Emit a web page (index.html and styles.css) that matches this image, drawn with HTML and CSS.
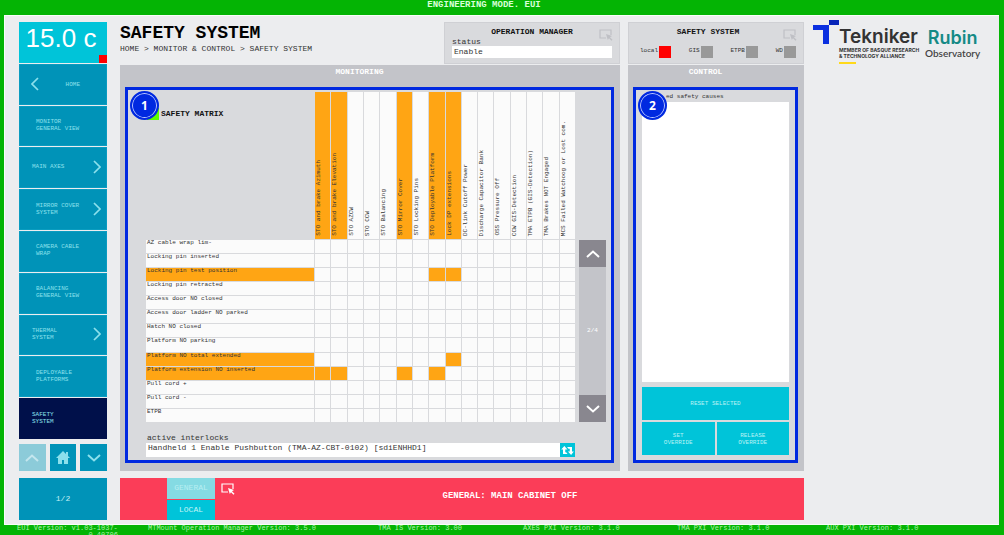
FILE: index.html
```html
<!DOCTYPE html>
<html lang="en">
<head>
<meta charset="utf-8">
<title>Safety System</title>
<link rel="stylesheet" href="styles.css">
</head>
<body>
<svg class="symbols" aria-hidden="true">
  <symbol id="pick" viewBox="0 0 14 12"><path d="M7 9H1V1h11v5" fill="none" stroke="currentColor" stroke-width="1.200"/><path d="M7 5l6 2-2 1.200 2.500 2.500-1 1-2.500-2.500L8.800 11z" fill="currentColor"/></symbol>
  <symbol id="right" viewBox="0 0 8 14"><path d="M1 1l6 6-6 6" fill="none" stroke="currentColor" stroke-width="1.700"/></symbol>
  <symbol id="left" viewBox="0 0 8 14"><path d="M7 1L1 7l6 6" fill="none" stroke="currentColor" stroke-width="1.700"/></symbol>
  <symbol id="up" viewBox="0 0 14 8"><path d="M1 7l6-5.500L13 7" fill="none" stroke="currentColor" stroke-width="2"/></symbol>
  <symbol id="down" viewBox="0 0 14 8"><path d="M1 1l6 5.500L13 1" fill="none" stroke="currentColor" stroke-width="2"/></symbol>
</svg>

<header class="mode-bar">ENGINEERING MODE. EUI</header>

<div class="screen">
  <nav class="menu" aria-label="Main menu">
    <div class="temperature">15.0 c<span class="led led-alarm"></span></div>
    <button class="item item-home"><svg class="chev"><use href="#left"/></svg><span>HOME</span></button>
    <button class="item"><span>MONITOR<br>GENERAL VIEW</span></button>
    <button class="item item-wide"><span>MAIN AXES</span><svg class="chev"><use href="#right"/></svg></button>
    <button class="item"><span>MIRROR COVER<br>SYSTEM</span><svg class="chev"><use href="#right"/></svg></button>
    <button class="item"><span>CAMERA CABLE<br>WRAP</span></button>
    <button class="item"><span>BALANCING<br>GENERAL VIEW</span></button>
    <button class="item item-wide"><span>THERMAL<br>SYSTEM</span><svg class="chev"><use href="#right"/></svg></button>
    <button class="item"><span>DEPLOYABLE<br>PLATFORMS</span></button>
    <button class="item item-wide item-current" aria-current="page"><span>SAFETY<br>SYSTEM</span></button>
  </nav>

  <div class="menu-tools">
    <button class="tool" disabled aria-label="Up"><svg class="arrow"><use href="#up"/></svg></button>
    <button class="tool" aria-label="Home"><svg class="house" viewBox="0 0 14 13"><path d="M7 0L0 7h2v6h4V9h2v4h4V7h2l-2-2V1h-2v2z" fill="currentColor"/></svg></button>
    <button class="tool" aria-label="Down"><svg class="arrow"><use href="#down"/></svg></button>
  </div>

  <main class="main">
    <div class="heading">
      <div class="titles">
        <h1>SAFETY SYSTEM</h1>
        <p class="crumbs">HOME &gt; MONITOR &amp; CONTROL &gt; SAFETY SYSTEM</p>
      </div>
      <section class="card manager">
        <h2>OPERATION MANAGER</h2>
        <svg class="pick"><use href="#pick"/></svg>
        <label for="status">status</label>
        <input id="status" class="field" value="Enable" readonly>
      </section>
    </div>

    <section class="card safety">
      <h2>SAFETY SYSTEM</h2>
      <svg class="pick"><use href="#pick"/></svg>
      <div class="leds">
        <span class="lamp">local<i class="led led-red"></i></span>
        <span class="lamp">GIS<i class="led"></i></span>
        <span class="lamp">ETPB<i class="led"></i></span>
        <span class="lamp">WD<i class="led"></i></span>
      </div>
    </section>

    <section class="panel">
      <h2>MONITORING</h2>
      <div class="frame">
        <span class="badge">1</span>
        <div class="matrix-row">
          <table class="matrix">
            <colgroup><col class="col-cause"><col span="16"></colgroup>
            <thead id="effects"></thead>
            <tbody id="causes"></tbody>
          </table>
          <div class="scroller">
            <button aria-label="Previous page"><svg class="arrow"><use href="#up"/></svg></button>
            <span>2/4</span>
            <button aria-label="Next page"><svg class="arrow"><use href="#down"/></svg></button>
          </div>
        </div>
        <div class="interlocks">
          <label for="interlocks">active interlocks</label>
          <div class="interlock-line">
            <input id="interlocks" class="field" value="Handheld 1 Enable Pushbutton (TMA-AZ-CBT-0102) [sdiENHHD1]" readonly>
            <button class="refresh" aria-label="Refresh"><svg viewBox="0 0 14 10"><path d="M3.500 0L0 4h2v5h5L5.500 7H4.500V4H7zM6.500 1L8 3h1.500v3H7.500L11 10l3-4h-2V1z" fill="currentColor"/></svg></button>
          </div>
        </div>
      </div>
    </section>

    <section class="panel">
      <h2>CONTROL</h2>
      <div class="frame control">
        <span class="badge">2</span>
        <label for="safety-causes">ed safety causes</label>
        <select id="safety-causes" multiple></select>
        <div class="actions">
          <button class="reset">RESET SELECTED</button>
          <button>SET<br>OVERRIDE</button>
          <button>RELEASE<br>OVERRIDE</button>
        </div>
      </div>
    </section>
  </main>

  <aside class="logos">
    <div class="tekniker">
      <svg class="mark" viewBox="0 0 26 24"><path d="M0 5h16v19h-6V10H0z" fill="#0a2fe0"/><path d="M16 0h10v5H16z" fill="#0724b8"/></svg>
      <div class="tekniker-text">
        <strong>Tekniker</strong>
        <small>MEMBER OF BASQUE RESEARCH<br>&amp; TECHNOLOGY ALLIANCE</small>
        <span class="underline"></span>
      </div>
    </div>
    <div class="rubin"><strong>Rubin</strong><span>Observatory</span></div>
  </aside>

  <div class="page-count">1/2</div>

  <div class="alarm">
    <div class="switch"><button disabled>GENERAL</button><button>LOCAL</button></div>
    <svg class="pick"><use href="#pick"/></svg>
    <strong>GENERAL: MAIN CABINET OFF</strong>
  </div>
</div>

<footer class="versions">
  <span class="eui">EUI Version: v1.03-1037-<br>0.40706</span>
  <span>MTMount Operation Manager Version: 3.5.0</span>
  <span>TMA IS Version: 3.00</span>
  <span>AXES PXI Version: 3.1.0</span>
  <span>TMA PXI Version: 3.1.0</span>
  <span>AUX PXI Version: 3.1.0</span>
</footer>
<script src="matrix.js"></script>
</body>
</html>
```

FILE: styles.css
```css
:root {
  --green: #04b404;
  --page: #ecedef;
  --card: #d9dadd;
  --panel: #c3c4c9;
  --teal: #0093b8;
  --cyan: #00c4d9;
  --ice: #8be0ec;
  --blue: #0029e0;
  --orange: #ffa514;
}
* { box-sizing: border-box; }
body {
  display: flex;
  flex-direction: column;
  height: 100vh;
  margin: 0;
  overflow: hidden;
  background: var(--green);
  color: #333;
  font: 8px/10px "Liberation Mono", monospace;
}
h1, h2, p { margin: 0; }
h2 { color: #111; font-size: 8px; line-height: 10px; text-align: center; }
button { padding: 0; border: 0; font: inherit; color: inherit; }
svg { display: block; }
.symbols { position: absolute; width: 0; height: 0; }

.mode-bar {
  height: 15px;
  padding-right: 36px;
  color: #d8ffd8;
  font-size: 9px;
  font-weight: bold;
  text-align: center;
}
.screen {
  flex: 1;
  min-height: 0;
  display: grid;
  grid-template-columns: 88px minmax(0, 1fr) 182px;
  grid-template-rows: minmax(0, 1fr) 27px 7px 42px;
  column-gap: 13px;
  margin: 0 5px 0 4px;
  padding: 6px 0 4px 14px;
  border: 1px solid #f8fff8;
  border-width: 1px 0 1px 1px;
  background: var(--page);
}

/* side menu */
.menu {
  grid-area: 1 / 1;
  display: grid;
  grid-template-rows: repeat(10, minmax(0, 1fr));
  gap: 1px;
  margin-bottom: 5px;
}
.temperature {
  position: relative;
  padding-right: 4px;
  background: var(--cyan);
  color: #fff;
  font: 26px/32px "Liberation Sans", sans-serif;
  text-align: center;
}
.led { width: 12px; height: 12px; background: #999; }
.led-red { background: #f00; }
.led-alarm { position: absolute; right: 0; bottom: 0; width: 8px; height: 8px; background: #f00; }
.item {
  display: flex;
  align-items: center;
  justify-content: space-between;
  padding: 0 5px 2px 16px;
  border: 1px solid #0a9cc0;
  background: var(--teal);
  color: var(--ice);
  font-size: 6px;
  line-height: 7px;
  text-align: left;
}
.item-wide { padding-left: 12px; }
.item-home { padding: 0 26px 0 11px; }
.item-current { background: #00104a; border-color: #00104a; }
.chev { width: 8px; height: 14px; }
.menu-tools {
  grid-area: 2 / 1;
  display: grid;
  grid-template-columns: repeat(3, 1fr);
  gap: 4px;
}
.tool {
  display: grid;
  place-items: center;
  background: var(--teal);
  color: var(--ice);
}
.tool:disabled { background: #8ccbd9; color: #c4e6ee; }
.arrow { width: 14px; height: 8px; }
.house { width: 14px; height: 13px; }
.page-count {
  grid-area: 4 / 1;
  display: grid;
  place-items: center;
  background: var(--teal);
  color: #c4f0f5;
}

/* main area */
.main {
  grid-area: 1 / 2 / 3 / 3;
  display: grid;
  grid-template-columns: minmax(0, 500fr) minmax(0, 176fr);
  grid-template-rows: 42px minmax(0, 1fr);
  gap: 1px 8px;
}
.heading { display: flex; justify-content: space-between; }
h1 { color: #000; font-size: 18px; line-height: 22px; }
.crumbs { line-height: 9px; }
.card {
  position: relative;
  padding: 4px 7px;
  border: 1px solid #cfd0d4;
  background: var(--card);
}
.manager { flex: 0 0 176px; }
.manager label { display: block; line-height: 9px; }
.field {
  display: block;
  width: 100%;
  height: 12px;
  padding: 0 2px 2px;
  border: 0;
  background: #fff;
  color: #333;
  font: inherit;
}
.pick { width: 14px; height: 12px; }
.card .pick { position: absolute; top: 6px; right: 6px; color: #bfc0c5; }
.safety h2 { padding-right: 16px; }
.leds { display: flex; justify-content: space-between; padding: 9px 0 0 4px; font-size: 6px; }
.lamp { display: flex; gap: 1px; line-height: 9px; }

.panel {
  display: flex;
  flex-direction: column;
  min-height: 0;
  padding: 2px 6px 8px 5px;
  background: var(--panel);
}
.panel h2 { height: 20px; padding-right: 20px; color: #fff; }
.frame {
  position: relative;
  flex: 1;
  min-height: 0;
  display: flex;
  flex-direction: column;
  border: 3px solid var(--blue);
  background: var(--card);
  padding: 2px 5px 3px 18px;
}
.badge {
  position: absolute;
  top: 1px;
  left: 2px;
  z-index: 1;
  width: 29px;
  height: 29px;
  border: 2px solid var(--blue);
  border-radius: 50%;
  background: var(--blue);
  box-shadow: inset 0 0 0 1px #b9c6ff;
  color: #fff;
  font: bold 12px/25px "Open Sans", sans-serif;
  text-align: center;
}
.matrix-row { flex: 1; min-height: 0; display: flex; gap: 4px; }
.matrix {
  flex: 1;
  min-width: 0;
  table-layout: fixed;
  border-collapse: separate;
  border-spacing: 1px;
  margin: -1px;
  font-size: 6px;
  line-height: 7px;
}
.matrix .col-cause { width: 168px; }
.matrix th, .matrix td { height: 13px; padding: 0; background: #fbfbfb; font-weight: normal; }
.matrix tbody th { padding-left: 1px; text-align: left; vertical-align: top; line-height: 6px; }
.matrix thead th { height: 147px; vertical-align: bottom; }
.matrix thead th span {
  display: block;
  width: 10px;
  padding-top: 3px;
  white-space: nowrap;
  writing-mode: vertical-rl;
  transform: rotate(180deg);
}
.matrix .on, .matrix thead .on { background: var(--orange); }
.matrix thead .corner {
  background: none;
  color: #111;
  font-size: 8px;
  font-weight: bold;
  text-align: left;
  vertical-align: top;
}
.corner div { display: flex; align-items: center; gap: 2px; padding: 16px 0 0 1px; line-height: 8px; }
.corner .led { background: #5cff00; }
.scroller {
  align-self: flex-end;
  display: flex;
  flex-direction: column;
  justify-content: space-between;
  align-items: center;
  width: 27px;
  height: 182px;
  background: var(--panel);
  color: #fff;
  font-size: 6px;
}
.scroller button {
  display: grid;
  place-items: center;
  width: 27px;
  height: 27px;
  background: #89878f;
}
.interlocks { padding: 10px 31px 0 0; }
.interlocks label { display: block; line-height: 11px; padding-left: 1px; }
.interlock-line { display: flex; }
.interlock-line .field { flex: 1; min-width: 0; height: 14px; padding-bottom: 5px; }
.refresh { display: grid; place-items: center; width: 15px; height: 14px; background: var(--cyan); color: #fff; }
.refresh svg { width: 13px; height: 9px; }

.control { padding: 2px 6px 5px; }
.control label { padding-left: 24px; font-size: 6px; }
.control select { flex: 1; min-height: 0; border: 0; border-radius: 0; background: #fff; }
.actions {
  display: grid;
  grid-template-columns: 1fr 1fr;
  grid-auto-rows: 33px;
  gap: 2px;
  padding-top: 5px;
}
.actions button { background: var(--cyan); color: #b8f2f5; font-size: 6px; line-height: 7px; }
.actions .reset { grid-column: span 2; }

/* logos */
.logos { grid-area: 1 / 3; display: flex; align-items: flex-start; gap: 9px; margin: -2px 0 0 -4px; }
.tekniker { display: flex; }
.mark { width: 26px; height: 24px; }
.tekniker-text { display: flex; flex-direction: column; width: 77px; padding-top: 7px; color: #333; white-space: nowrap; }
.tekniker-text strong { font: 600 19px/20px Inter, sans-serif; }
.tekniker-text small { font: bold 5px/6px Inter, sans-serif; }
.underline { width: 17px; height: 2px; margin-top: 3px; background: #ffd91a; }
.rubin { display: flex; flex-direction: column; align-items: center; padding-top: 8px; }
.rubin strong { color: #158a86; font: 600 18px/20px Inter, sans-serif; }
.rubin span { color: #444; font: 600 10px/10px Lato, sans-serif; }

/* alarm strip */
.alarm {
  grid-area: 4 / 2;
  display: flex;
  padding: 0 19px 0 47px;
  background: #fb3d58;
  color: #fff;
}
.switch { display: grid; grid-template-rows: 1fr 1fr; gap: 1px; width: 48px; }
.switch button { background: var(--cyan); color: #c4f5f7; }
.switch button:disabled { background: #85dbe3; color: #b8eef2; }
.alarm .pick { margin: 5px 0 0 6px; }
.alarm strong { flex: 1; padding-top: 12px; font-size: 9px; line-height: 12px; text-align: center; }

/* version strip */
.versions {
  display: grid;
  grid-template-columns: 131fr 230fr 145fr 154fr 149fr 178fr;
  height: 10px;
  padding-left: 17px;
  overflow: hidden;
  color: #a9f5a9;
  font-size: 7px;
  line-height: 7px;
  white-space: nowrap;
}
.eui { justify-self: start; text-align: right; }
```

FILE: matrix.js
```js
const effects = [
  ["STO and brake Azimuth", 1], ["STO and brake Elevation", 1], ["STO AZCW", 0], ["STO CCW", 0],
  ["STO Balancing", 0], ["STO Mirror Cover", 1], ["STO Locking Pins", 0], ["STO Deployable Platform", 1],
  ["Lock DP extensions", 1], ["DC-link Cutoff Power", 0], ["Discharge Capacitor Bank", 0],
  ["OSS Pressure Off", 0], ["CCW GIS-Detection", 0], ["TMA ETPB (GIS-Detection)", 0],
  ["TMA Brakes NOT Engaged", 0], ["MCS Failed Watchoog or Lost com.", 0]
];
// Each cause lists the indexes of the effects it has triggered.
const causes = [
  ["AZ cable wrap lim-", []], ["Locking pin inserted", []], ["Locking pin test position", [7, 8]],
  ["Locking pin retracted", []], ["Access door NO closed", []], ["Access door ladder NO parked", []],
  ["Hatch NO closed", []], ["Platform NO parking", []], ["Platform NO total extended", [8]],
  ["Platform extension NO inserted", [0, 1, 5, 7]], ["Pull cord +", []], ["Pull cord -", []], ["ETPB", []]
];
const mark = on => on ? ' class="on"' : "";
document.getElementById("effects").innerHTML =
  '<tr><th class="corner"><div><i class="led"></i>SAFETY MATRIX</div></th>' +
  effects.map(([name, on]) => `<th scope="col"${mark(on)}><span>${name}</span></th>`).join("") + "</tr>";
document.getElementById("causes").innerHTML = causes.map(([name, hits]) =>
  `<tr><th scope="row"${mark(hits.length)}>${name}</th>` +
  effects.map((_, i) => `<td${mark(hits.includes(i))}></td>`).join("") + "</tr>").join("");
```
